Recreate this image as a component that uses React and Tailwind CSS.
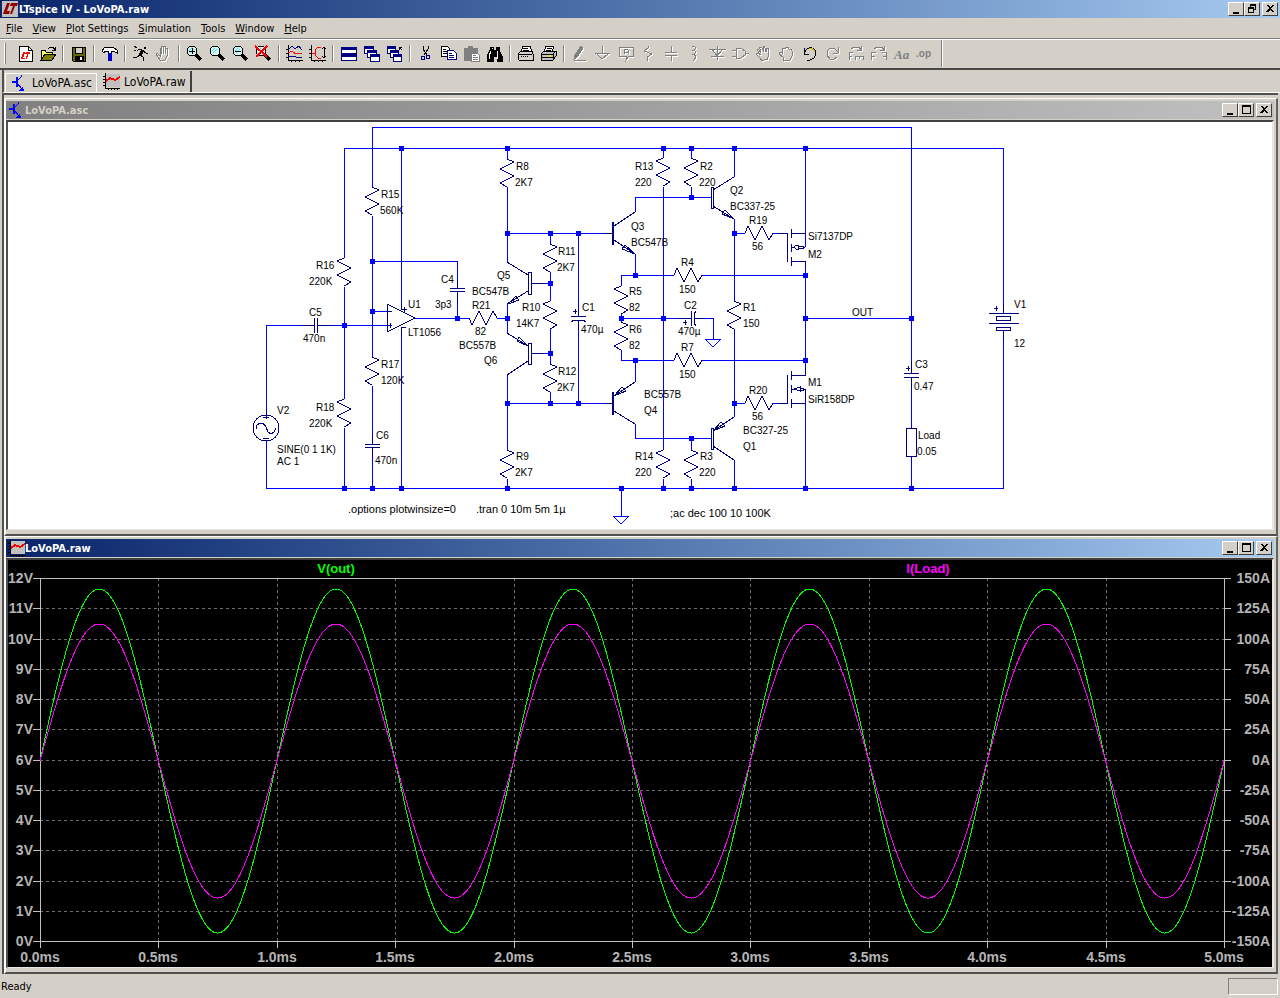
import React, { useState } from 'react';

const NAVY = '#000080';
const GRAY = '#808080';

// --- Toolbar icon helpers ---
const Icon = ({ children }) => (
    <svg width="17" height="17" viewBox="0 0 17 17" fill="none" stroke="#000" shapeRendering="crispEdges" aria-hidden="true">
        {children}
    </svg>
);

// Disabled tools: gray shape with a white edge below and to the right
const Emboss = ({ children }) => (
    <Icon>
        <g stroke="#fff" color="#fff" transform="translate(1 1)">{children}</g>
        <g stroke={GRAY} color={GRAY}>{children}</g>
    </Icon>
);

const Lens = ({ children }) => (
    <Icon>
        <circle cx="6" cy="6" r="5" fill="#d4f4f4" />
        <path d="M3 6l3-3M4 8l4-4" stroke="#40e0e8" />
        <path d="M10 10l5 5" strokeWidth="3" />
        {children}
    </Icon>
);

const LtLogo = () => (
    <>
        <path d="M5 2h3L5 10h3l-1 3H1z" />
        <path d="M8 5l1-3h7l-1 3h-2l-3 8H8l3-8z" />
    </>
);

const MiniWindow = ({ x, y, w = 9, h = 7 }) => (
    <g stroke={NAVY}>
        <rect x={x} y={y} width={w} height={h} fill="#fff" />
        <path d={`M${x} ${y + 1}h${w}`} strokeWidth="3" />
    </g>
);

const HandShape = () => (
    <path d="M5 15l-1-3-3-4 1-1 3 2-2-5 1-1 2 4V2h2l1 5 1-5h1v6l2-4 1 1-1 6-2 4z" />
);

const NpnIcon = () => (
    <Icon>
        <g stroke="#00f" fill="#00f">
            <path d="M1 7h5" strokeWidth="2" />
            <path d="M6 2v10" strokeWidth="2" />
            <path d="M6 6l4-4V0M6 8l5 6" fill="none" />
            <path d="M13 16H8l4-5z" stroke="none" />
        </g>
    </Icon>
);

const TraceIcon = () => (
    <Icon>
        <rect x="3" y="1" width="14" height="13" fill="#c0c0c0" stroke="none" />
        <path d="M2 0v15H17M0 3h2M0 6h2M0 9h2M0 12h2M5 15v2M8 15v2M11 15v2M14 15v2" />
        <path d="M3 8l4-3 5 2 5-3" stroke="#f00" strokeWidth="2" />
    </Icon>
);

const icons = {
    New: (
        <Icon>
            <path d="M3 1h9l4 4v11H3z" fill="#fff" />
            <path d="M12 1v4h4" />
            <g transform="translate(4 6) scale(.65)" fill="#f00" stroke="none"><LtLogo /></g>
        </Icon>
    ),
    Open: (
        <Icon>
            <path d="M2 15V5h4l1 2h6v2" fill="#ffff60" />
            <path d="M2 15l4-6h11l-4 6z" fill="#808000" />
            <path d="M9 4l2-2h3l2 3M13 5h3V2" />
        </Icon>
    ),
    Save: (
        <Icon>
            <path d="M2 2h13v14H3l-1-1z" fill="#686800" />
            <rect x="5" y="2" width="7" height="6" fill="#d4d0c8" />
            <rect x="5" y="11" width="8" height="4" fill="#000" />
            <rect x="10" y="12" width="2" height="3" fill="#fff" stroke="none" />
        </Icon>
    ),
    'Control Panel': (
        <Icon>
            <path d="M1 6l2-3 3-1h6l4 3v3l-4-2h-2v2H7V6H4L3 8z" fill="#fff" />
            <path d="M9 8v8" stroke="#00c" strokeWidth="4" />
        </Icon>
    ),
    Run: (
        <Icon>
            <circle cx="13" cy="3" r="1" fill="#000" />
            <path d="M11 5l-3 5" strokeWidth="3" />
            <path d="M11 6l3 2h2M10 5L7 4 5 6M8 10l3 2v4M8 10l-3 2H1M2 1l3 2M2 5h2" />
        </Icon>
    ),
    Halt: <Emboss><path d="M5 15l-4-6 1-1 3 3V3h1v6V1h2v8V1h2v8V3h2v8l-2 4z" /></Emboss>,
    'Zoom In': <Lens><path d="M6 3v6M3 6h6" /></Lens>,
    'Zoom Back': <Lens />,
    'Zoom Out': <Lens><path d="M3 6h6" /></Lens>,
    'Zoom Full': <Lens><path d="M0 1l12 11M12 1L1 12" stroke="#f00" strokeWidth="2" /></Lens>,
    'Pick Traces': (
        <Icon>
            <path d="M2 0v15h15M0 4h2M0 8h2M0 12h2M5 15v2M9 15v2M13 15v2" />
            <path d="M2 5l4-4 3 3 4-3 3 4" stroke={NAVY} />
            <path d="M2 8l4-2 4 3 6-1" stroke="#f00" />
            <path d="M2 11h5l3 1h6" stroke={NAVY} />
        </Icon>
    ),
    Autorange: (
        <Icon>
            <path d="M2 0v15h15M0 4h2M0 8h2M0 12h2M5 15v2M9 15v2M13 15v2M15 2v11M13 4l2-2 2 2M13 11l2 2 2-2" />
            <path d="M12 2H9L6 5v5l3 3h3M6 8H3" stroke="#f00" />
        </Icon>
    ),
    Tile: <Icon><MiniWindow x={1} y={2} w={15} h={6} /><MiniWindow x={1} y={9} w={15} h={6} /></Icon>,
    Cascade: <Icon><MiniWindow x={1} y={1} /><MiniWindow x={4} y={5} /><MiniWindow x={7} y={9} /></Icon>,
    'Close All': (
        <Icon>
            <MiniWindow x={1} y={1} w={8} /><MiniWindow x={4} y={5} w={8} /><MiniWindow x={7} y={9} w={8} />
            <path d="M16 5l-3-3M13 5V2h3" />
        </Icon>
    ),
    Cut: (
        <Icon>
            <path d="M6 1v3l4 6M11 1v3l-4 6" />
            <circle cx="6" cy="13" r="2" stroke={NAVY} /><circle cx="11" cy="12" r="2" stroke={NAVY} />
        </Icon>
    ),
    Copy: (
        <Icon>
            <path d="M1 1h6l2 2v8H1z" fill="#fff" />
            <path d="M3 4h3M3 6h4M3 8h4" />
            <path d="M7 5h6l3 3v6H7z" fill="#fff" stroke={NAVY} />
            <path d="M9 8h3M9 10h5M9 12h5" stroke={NAVY} />
        </Icon>
    ),
    Paste: (
        <Icon>
            <path d="M1 3h4l1-2h3l1 2h4v4H8v8H1z" fill={GRAY} stroke={GRAY} />
            <path d="M8 8h6l2 2v6H8z" fill="#fff" stroke={GRAY} />
            <path d="M10 10h3M10 12h5M10 14h5" stroke={GRAY} />
        </Icon>
    ),
    Find: (
        <Icon>
            <path d="M4 2h3v3h3V2h3v3l3 6v5h-5v-5H7v5H1v-5l3-6z" fill="#000" />
            <path d="M5 6l-2 5v3M12 6l-1 3v5M6 3v1" stroke="#fff" />
        </Icon>
    ),
    'Print Setup': (
        <Icon>
            <path d="M4 7l2-6h7l2 6z" fill="#fff" />
            <path d="M1 9l3-3h11l1 3v6H2z" fill="#d4d0c8" />
            <path d="M1 9h14M4 15h11M6 3h5M6 5h6" /><path d="M4 11h8" strokeDasharray="1 1" />
        </Icon>
    ),
    Print: (
        <Icon>
            <path d="M4 7l2-6h8l-2 6z" fill="#fff" />
            <path d="M1 9l3-3h12v5l-3 4H1z" fill="#c0c0c0" />
            <path d="M1 9h12l3-3M13 9v6M7 3h5M6 5h5M1 12h12" />
            <path d="M8 11h3" stroke="#ffe000" strokeWidth="2" />
        </Icon>
    ),
    Wire: <Emboss><path d="M10 1L4 10l-1 4 3-2L12 3z" fill="currentColor" /><path d="M3 15h12" /></Emboss>,
    Ground: <Emboss><path d="M8 1v7M1 8h15M3 9l5 5 6-5" /></Emboss>,
    'Label Net': (
        <Emboss>
            <path d="M2 2h14v9h-4l-3 4v-4H2z" />
            <path d="M7 9V5l1-1h2l1 1v4M7 7h4" />
        </Emboss>
    ),
    Resistor: <Emboss><path d="M8 1v2L4 6l8 3-5 3v4" /></Emboss>,
    Capacitor: <Emboss><path d="M8 1v6M2 7h12M2 10h12M8 10v6" /></Emboss>,
    Inductor: <Emboss><path d="M6 1h2l2 2-2 2H6h2l2 2-2 2H6h2l2 3-2 3H7" /></Emboss>,
    Diode: <Emboss><path d="M0 4h17M3 4l5 7 6-7M2 11h13M8 1v14" /></Emboss>,
    Component: <Emboss><path d="M4 3h5l4 3v4l-4 3H4zM0 5h4M0 11h4M13 8h4" /></Emboss>,
    Move: <Emboss><g transform="rotate(-12 8 8)"><HandShape /></g></Emboss>,
    Drag: <Emboss><path d="M5 15v-3L1 9V7l3 1V4l2-1 1 1 1-2h2l1 2h2l1 2v5l-2 4z" /></Emboss>,
    Undo: (
        <Icon>
            <path d="M3 9V3M3 9h5" />
            <path d="M3 8l3-4 4-2 4 3 1 4-2 4-4 2H6" />
            <path d="M8 3h3l3 4" stroke="#c8c000" />
        </Icon>
    ),
    Redo: <Emboss><path d="M14 8V2M14 8H9M14 7l-4-4H6L3 6v4l3 4h4l3-2" /></Emboss>,
    Rotate: (
        <Emboss>
            <path d="M2 15V7h4M2 11h3M8 15v-4h8v4M12 11v3M4 4l3-2h5l2 3M14 1v4h-4" />
        </Emboss>
    ),
    Mirror: (
        <Emboss>
            <path d="M1 15V7h5M1 11h4M16 15V7h-4M16 11h-3M4 4l3-2h5l2 3M14 1v4h-4" />
        </Emboss>
    ),
    Text: (
        <Icon>
            <text x="1" y="14" fill={GRAY} stroke="none" className="font-['Liberation_Serif',serif] text-[13px] font-bold italic">Aa</text>
        </Icon>
    ),
    'SPICE Directive': (
        <Icon>
            <text x="0" y="12" fill={GRAY} stroke="none" className="font-['Liberation_Sans',sans-serif] text-[10px] font-bold">.op</text>
        </Icon>
    ),
};

const toolGroups = [
    ['New', 'Open'],
    ['Save'],
    ['Control Panel'],
    ['Run', 'Halt'],
    ['Zoom In', 'Zoom Back', 'Zoom Out', 'Zoom Full'],
    ['Pick Traces', 'Autorange'],
    ['Tile', 'Cascade', 'Close All'],
    ['Cut', 'Copy', 'Paste', 'Find'],
    ['Print Setup', 'Print'],
    ['Wire', 'Ground', 'Label Net', 'Resistor', 'Capacitor', 'Inductor', 'Diode', 'Component', 'Move', 'Drag', 'Undo', 'Redo', 'Rotate', 'Mirror', 'Text', 'SPICE Directive'],
];

const menus = ['File', 'View', 'Plot Settings', 'Simulation', 'Tools', 'Window', 'Help'];

// --- Window caption buttons ---
const glyphs = {
    Minimize: <path d="M3 9h6v2H3z" fill="#000" />,
    Maximize: <path d="M2 1h9v9H2zM3 3v6h7V3z" fill="#000" fillRule="evenodd" />,
    Restore: <path d="M4 1h6v6H8v3H2V4h2zM5 3v1h3v2h1V3zM3 6v3h4V6z" fill="#000" fillRule="evenodd" />,
    Close: <path d="M2 2h2l2 2 2-2h2L7 5l3 4H8L6 7 4 9H2l3-4z" fill="#000" />,
};

const CaptionButtons = ({ middle }) => (
    <div className="ml-auto flex">
        {['Minimize', middle, 'Close'].map((name) => (
            <button
                key={name}
                type="button"
                aria-label={name}
                className="flex h-[14px] w-4 items-center justify-center border border-t-white border-l-white border-r-[#404040] border-b-[#404040] bg-[#d4d0c8] last:ml-[2px]"
            >
                <svg width="12" height="12" viewBox="0 0 12 12" shapeRendering="crispEdges" className="shrink-0">{glyphs[name]}</svg>
            </button>
        ))}
    </div>
);

// --- Schematic data ---
const wires = [
    'M372 187V127H911V373', 'M344 258V148H1003V313', 'M344 287V399M344 428V488', 'M372 216V357M372 386V444M372 448V488',
    'M266 414V325H314M318 325H387', 'M266 441V488H1003V331', 'M401 148V310M401 327V488', 'M372 311H387', 'M415 318H469M497 318H507',
    'M372 261H457V288M457 292V318', 'M507 148V159M507 187V262M507 304V333M507 375V450M507 479V488', 'M507 233H611M507 403H611',
    'M550 233V244M550 272V301M550 329V364M550 392V403M532 283H550M532 353H550', 'M578 233V316M578 320V403',
    'M635 212V197H711M635 254V275M621 286V275H674M702 275H805', 'M621 314V322M621 318H690M695 318H713V339', 'M621 350V360H674M702 360H805M635 360V382',
    'M635 424V438H711', 'M663 148V158M663 187V450M663 479V488', 'M691 148V158M691 187V197M691 438V450M691 479V488',
    'M734 148V177M734 219V301M734 329V417M734 460V488', 'M734 233H745M773 233H787M734 403H745M773 403H787',
    'M805 148V247M805 261V375M805 389V488M805 318H911', 'M911 378V428M911 457V488', 'M621 488V516',
    'M613 516H629L621 524ZM705 339H721L713 347Z',
];

const nodes = [
    [401, 148], [507, 148], [663, 148], [691, 148], [734, 148], [805, 148], [372, 261], [372, 311], [344, 325], [457, 318],
    [507, 318], [507, 233], [550, 233], [578, 233], [550, 283], [550, 353], [507, 403], [550, 403], [578, 403], [635, 275],
    [621, 318], [663, 318], [635, 360], [691, 197], [691, 438], [734, 233], [734, 403], [805, 275], [805, 318], [805, 360],
    [911, 318], [344, 488], [372, 488], [401, 488], [507, 488], [621, 488], [663, 488], [691, 488], [734, 488], [805, 488], [911, 488],
];

// x, y of the top end; side is the direction of the first bend
const resistors = [
    [507, 159, 1], [372, 187, 1], [344, 258, -1], [344, 399, -1], [372, 357, 1], [507, 450, 1], [550, 244, 1], [550, 301, -1],
    [550, 364, 1], [621, 286, -1], [621, 322, 1], [663, 158, -1], [691, 158, 1], [734, 301, 1], [663, 450, -1], [691, 450, 1],
];
const flatResistors = [[469, 318, 1], [745, 233, -1], [745, 403, -1], [674, 275, -1], [674, 360, -1]];

const symbols = [
    // U1
    'M387 304V332L415 318ZM387 311H392M387 325H392M390 323V328M401 303V310M402 309H407M404 307V312M401 327V333M402 327H406',
    // C5, C4, C6
    'M302 325H314M318 325H330M314 318V333M317 318V333', 'M450 288H465M450 291H465M457 280V288M457 291V302', 'M365 444H380M365 447H380M372 436V444M372 447V458',
    // C1, C2, C3
    'M571 316H586M571 322L574 320H583L586 322M578 307V316M578 320V330M573 311H577M575 309V314',
    'M691 311V326M696 311L694 314V323L696 326M678 318H691M694 318H705M683 322H687M685 320V325',
    'M904 373H919M904 378L907 377H916L919 378M911 362V373M911 377V388M906 368H910M908 366V371',
    // V2
    'M266 412V419M263 417H269M263 438H269M256 429L257 425L260 423H263L266 427L268 432L271 434L274 432L276 428',
    // Q5, Q6
    'M507 262L528 275M507 304L528 291M508 304L516 296L519 300ZM528 272H531V294H528Z',
    'M507 333L528 346M528 346L517 341L519 337ZM507 375L528 361M528 343H531V364H528ZM531 283H545M531 353H545',
    // Q3, Q4
    'M612 222V245M613 222V245M614 226L635 212M614 240L635 254M635 254L622 249L625 245Z',
    'M612 392V415M613 392V415M635 382L614 396M614 396L622 387L626 391ZM614 411L635 424M604 233H612M604 403H612',
    // Q2, Q1
    'M711 187H713V208H711ZM734 177L713 190M713 206L734 219M734 219L722 214L725 210Z',
    'M711 428H713V449H711ZM734 417L713 431M713 431L721 422L725 426ZM713 446L734 460',
    // M2, M1
    'M778 233H787V262M791 229V238M791 244V252M791 257V266M791 233H805M791 247H794M803 247H805M791 261H805V268M794 247L796 245H798V249H796ZM798 246H803V248H798',
    'M778 403H787V375M791 371V380M791 385V393M791 399V408M791 375H805V368M791 389H794M803 389H805V400M791 403H805M794 389L800 387V391ZM800 388H803V390H800',
    // Load, V1
    'M906 428H916V456H906Z', 'M989 313H1019M996 316H1010V320H996ZM989 323H1019M996 327H1010V330H996ZM1003 305V313M1003 330V338M994 308H998M996 306V311',
];

const labels = [
    [381, 198, 'R15'], [380, 214, '560K'], [316, 269, 'R16'], [309, 285, '220K'], [309, 316, 'C5'], [303, 342, '470n'], [408, 308, 'U1'], [408, 336, 'LT1056'],
    [441, 283, 'C4'], [435, 308, '3p3'], [381, 368, 'R17'], [381, 384, '120K'], [316, 411, 'R18'], [309, 427, '220K'], [277, 414, 'V2'], [277, 453, 'SINE(0 1 1K)'],
    [277, 465, 'AC 1'], [376, 439, 'C6'], [375, 464, '470n'], [516, 170, 'R8'], [515, 186, '2K7'], [497, 279, 'Q5'], [472, 295, 'BC547B'], [472, 309, 'R21'],
    [475, 335, '82'], [459, 349, 'BC557B'], [484, 364, 'Q6'], [522, 311, 'R10'], [516, 327, '14K7'], [558, 255, 'R11'], [557, 271, '2K7'], [558, 375, 'R12'],
    [557, 391, '2K7'], [582, 311, 'C1'], [581, 333, '470µ'], [516, 460, 'R9'], [515, 476, '2K7'], [631, 230, 'Q3'], [631, 246, 'BC547B'], [635, 170, 'R13'],
    [635, 186, '220'], [700, 170, 'R2'], [699, 186, '220'], [730, 194, 'Q2'], [730, 210, 'BC337-25'], [749, 224, 'R19'], [752, 250, '56'], [808, 240, 'Si7137DP'],
    [808, 258, 'M2'], [681, 266, 'R4'], [679, 293, '150'], [629, 295, 'R5'], [629, 311, '82'], [684, 309, 'C2'], [678, 335, '470µ'], [743, 311, 'R1'],
    [743, 327, '150'], [629, 333, 'R6'], [629, 349, '82'], [681, 351, 'R7'], [679, 378, '150'], [644, 398, 'BC557B'], [644, 414, 'Q4'], [749, 394, 'R20'],
    [752, 420, '56'], [808, 386, 'M1'], [808, 403, 'SiR158DP'], [743, 434, 'BC327-25'], [743, 450, 'Q1'], [635, 460, 'R14'], [635, 476, '220'], [700, 460, 'R3'],
    [699, 476, '220'], [852, 316, 'OUT'], [915, 368, 'C3'], [914, 390, '0.47'], [918, 439, 'Load'], [917, 455, '0.05'], [1014, 308, 'V1'], [1014, 347, '12'],
];

const directives = [[348, 513, '.options plotwinsize=0'], [476, 513, '.tran 0 10m 5m 1µ'], [670, 517, ';ac dec 100 10 100K']];

const Schematic = () => (
    <svg viewBox="8 122 1264 407" className="block w-full bg-white" role="img" aria-label="Schematic">
        <g fill="none" shapeRendering="crispEdges">
            <path d={wires.join('')} stroke="#0000ff" />
            <g stroke={NAVY}>
                {resistors.map(([x, y, s]) => (
                    <path key={`${x}-${y}`} d={`M${x} ${y}l${7 * s} 3l${-14 * s} 7l${14 * s} 7l${-14 * s} 7l${7 * s} 4`} />
                ))}
                {flatResistors.map(([x, y, s]) => (
                    <path key={`${x}-${y}`} d={`M${x} ${y}l3 ${7 * s}l7 ${-14 * s}l7 ${14 * s}l7 ${-14 * s}l4 ${7 * s}`} />
                ))}
                <path d={symbols.join('')} />
                <circle cx="266" cy="428" r="13" />
            </g>
            {nodes.map(([x, y]) => (
                <rect key={`${x}-${y}`} x={x - 2} y={y - 2} width="5" height="5" fill="#0000ff" />
            ))}
        </g>
        <g className="font-['Liberation_Sans',Arial,sans-serif] text-[10px]">
            {labels.map(([x, y, text]) => <text key={`${x}-${y}`} x={x} y={y}>{text}</text>)}
        </g>
        <g className="font-['Liberation_Sans',Arial,sans-serif] text-[11px]">
            {directives.map(([x, y, text]) => <text key={text} x={x} y={y}>{text}</text>)}
        </g>
    </svg>
);

// --- Waveform plot ---
const LEFT = 40;
const RIGHT = 1224;
const TOP = 578;
const BOTTOM = 941;
const rows = Array.from({ length: 13 }, (_, i) => Math.round(TOP + ((BOTTOM - TOP) * i) / 12));
const cols = Array.from({ length: 11 }, (_, i) => Math.round(LEFT + ((RIGHT - LEFT) * i) / 10));

const sine = (amplitude) => {
    const points = [];
    for (let x = LEFT; x <= RIGHT; x += 1) {
        const y = 761 - amplitude * Math.sin(((x - LEFT) / (RIGHT - LEFT)) * 10 * Math.PI);
        points.push(`${x} ${y.toFixed(1)}`);
    }
    return `M${points.join('L')}`;
};

const Waveform = () => (
    <svg viewBox="8 560 1264 407" className="block w-full bg-black" role="img" aria-label="Waveform">
        <g fill="none" shapeRendering="crispEdges">
            <g stroke="#707070" strokeDasharray="3 3">
                {rows.slice(1, -1).map((y) => <path key={y} d={`M${LEFT} ${y}H${RIGHT}`} />)}
                {cols.slice(1, -1).map((x) => <path key={x} d={`M${x} ${TOP}V${BOTTOM}`} />)}
            </g>
            <g stroke="#c0c0c0">
                <rect x={LEFT} y={TOP} width={RIGHT - LEFT} height={BOTTOM - TOP} />
                {rows.map((y) => <path key={y} d={`M${LEFT - 7} ${y}H${LEFT}M${RIGHT} ${y}h7`} />)}
                {cols.map((x) => <path key={x} d={`M${x} ${BOTTOM}v7`} />)}
            </g>
            <path d={sine(172)} stroke="#00ff00" />
            <path d={sine(137)} stroke="#ff00ff" />
        </g>
        <g className="font-['Liberation_Sans',Arial,sans-serif] text-[13px] font-bold">
            <text x="336" y="573" textAnchor="middle" fill="#00ff00">V(out)</text>
            <text x="928" y="573" textAnchor="middle" fill="#ff00ff">I(Load)</text>
        </g>
        <g fill="#b4b4b4" className="font-['Liberation_Sans',Arial,sans-serif] text-[14px] font-bold">
            {rows.map((y, i) => <text key={y} x="33" y={y + 5} textAnchor="end">{12 - i}V</text>)}
            {rows.map((y, i) => <text key={y} x="1270" y={y + 5} textAnchor="end">{150 - i * 25}A</text>)}
            {cols.map((x, i) => <text key={x} x={x} y="962" textAnchor="middle">{(i / 2).toFixed(1)}ms</text>)}
        </g>
    </svg>
);

const ChildWindow = ({ title, icon, active, children }) => (
    <section className="border-2 border-t border-t-white border-l-white border-r-[#606060] border-b-[#505050] bg-[#d4d0c8] pt-[2px] pr-[2px] pb-1">
        <header
            className={
                active
                    ? 'flex h-[18px] items-center bg-linear-to-r from-[#0a246a] to-[#a6caf0] pr-[2px] text-white'
                    : 'flex h-[18px] items-center bg-linear-to-r from-[#808080] to-[#c0c0c0] pr-[2px] text-[#d4d0c8]'
            }
        >
            <span className="ml-[2px]">{icon}</span>
            <h2 className="pt-[2px] font-bold">{title}</h2>
            <CaptionButtons middle="Maximize" />
        </header>
        <div className="mt-px border-2 border-b border-t-[#404040] border-l-[#505050] border-r-[#e8e6e0] border-b-[#e8e6e0]">{children}</div>
    </section>
);

const App = () => {
    const [activeDoc, setActiveDoc] = useState('LoVoPA.raw');
    const docs = [
        { name: 'LoVoPA.asc', icon: <NpnIcon /> },
        { name: 'LoVoPA.raw', icon: <TraceIcon /> },
    ];

    return (
        <div className="flex min-h-screen flex-col bg-[#d4d0c8] font-['DejaVu_Sans_Condensed','DejaVu_Sans',Tahoma,sans-serif] text-[11px] leading-4 text-black">
            {/* --- Title bar --- */}
            <header className="flex h-[18px] items-center bg-linear-to-r from-[#0a246a] to-[#a6caf0] pr-[2px] pl-[2px] text-white">
                <svg width="16" height="16" viewBox="0 0 16 16" className="mr-px bg-[#c0c0c0]" fill="#900000"><LtLogo /></svg>
                <h1 className="pt-[2px] font-bold">LTspice IV - LoVoPA.raw</h1>
                <CaptionButtons middle="Restore" />
            </header>

            {/* --- Menu --- */}
            <nav className="flex h-5 items-center gap-[10px] pt-[2px] pl-[6px]">
                {menus.map((name) => (
                    <button key={name} type="button">
                        <span className="underline">{name[0]}</span>{name.slice(1)}
                    </button>
                ))}
            </nav>

            {/* --- Toolbar --- */}
            <div className="border-t border-b-2 border-t-[#808080] border-b-[#484848]">
                <div className="flex h-[29px] items-center border-t border-t-white pb-px pl-1">
                    <div className="mr-[7px] h-[21px] w-[2px] border-l border-l-white border-r border-r-[#808080]" />
                    {toolGroups.map((group, i) => (
                        <div key={group[0]} className="flex items-center">
                            {i > 0 && <div className="mx-[3px] h-[17px] w-[2px] border-l border-l-[#808080] border-r border-r-white" />}
                            {group.map((name) => (
                                <button key={name} type="button" aria-label={name} className="flex h-[21px] w-[23px] items-center justify-center">
                                    {icons[name]}
                                </button>
                            ))}
                        </div>
                    ))}
                    <div className="ml-[5px] h-full w-[2px] border-l border-l-[#808080] border-r border-r-white" />
                </div>
            </div>

            {/* --- Document tabs --- */}
            <div role="tablist" className="ml-[2px] flex h-[23px] items-end border-b border-l-2 border-b-white border-l-[#505050] pl-px">
                {docs.map((doc) => (
                    <button
                        key={doc.name}
                        type="button"
                        role="tab"
                        aria-selected={doc.name === activeDoc}
                        onClick={() => setActiveDoc(doc.name)}
                        className={
                            doc.name === activeDoc
                                ? 'flex h-[21px] items-center gap-1 border-r-2 border-r-[#404040] pr-1 pl-[6px] text-[12px]'
                                : 'flex h-[19px] items-center gap-1 border border-b-0 border-white pr-1 pl-[5px] text-[12px]'
                        }
                    >
                        {doc.icon}
                        {doc.name}
                    </button>
                ))}
            </div>

            {/* --- Child windows --- */}
            <main className="mr-[2px] ml-[2px] border-t-2 border-l-2 border-t-[#505050] border-l-[#505050] pt-[3px]">
                <ChildWindow title="LoVoPA.asc" icon={<NpnIcon />} active={false}>
                    <Schematic />
                </ChildWindow>
                <ChildWindow title="LoVoPA.raw" icon={<TraceIcon />} active>
                    <Waveform />
                </ChildWindow>
            </main>

            {/* --- Status bar --- */}
            <footer className="flex flex-1 items-center justify-between pr-[2px] pl-px">
                <span className="pt-[2px]">Ready</span>
                <div className="h-[17px] w-[50px] border border-t-[#808080] border-l-[#808080] border-r-white border-b-white" />
            </footer>
        </div>
    );
};

export default App;
